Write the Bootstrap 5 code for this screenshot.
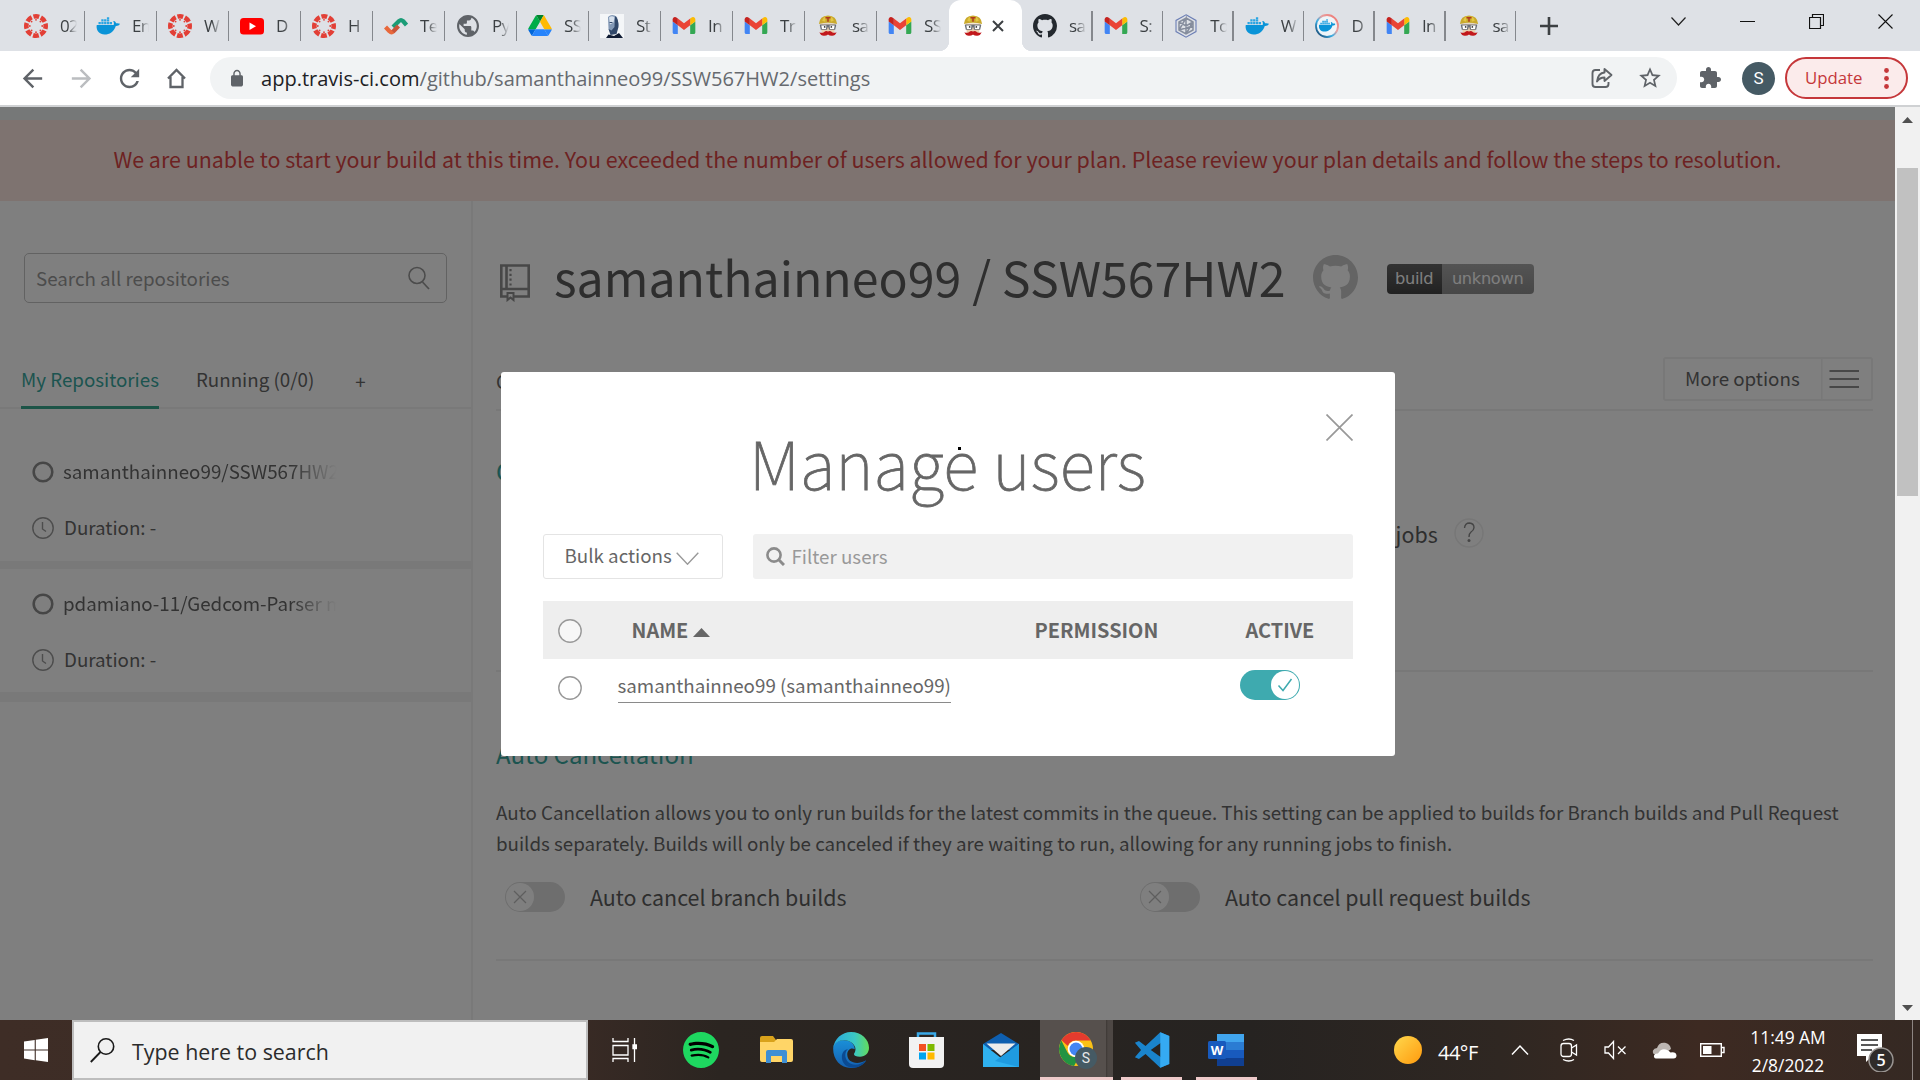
<!DOCTYPE html>
<html lang="en">
<head>
<meta charset="utf-8">
<title>Travis CI - Manage users</title>
<link href="https://cdn.jsdelivr.net/npm/bootstrap@5.3.0/dist/css/bootstrap.min.css" rel="stylesheet">
<style>
:root{--src:"Noto Sans CJK SC","Open Sans",sans-serif;--ui:"Open Sans","Noto Sans",sans-serif}
body{width:1920px;height:1080px;overflow:hidden;font-family:var(--src);font-size:18.75px;line-height:24px;color:#666;background:#fff}
svg{display:block;flex:none}
.defs{position:absolute;width:0;height:0}
.ui{font-family:var(--ui)}
/* browser tabs */
.tabstrip{height:51px;background:#dee1e6;color:#3c4043;font-size:17px;padding-left:13px}
.btab{width:72px;height:51px;flex:none;padding-left:11px}
.btab.late{width:70.6px}
.btab .cap{width:17px;margin-left:12px;overflow:hidden;white-space:nowrap;letter-spacing:-.6px;-webkit-mask-image:linear-gradient(90deg,#000 45%,transparent)}
.btab .sep{width:1.5px;height:30px;background:#85888d;margin-left:auto}
.btab.on{position:relative;width:73px;background:#fff;border-radius:12px 12px 0 0;padding-left:14px}
.btab.on::before,.btab.on::after{content:"";position:absolute;bottom:0;width:10px;height:10px}
.btab.on::before{left:-10px;background:radial-gradient(circle at 0 0,#dee1e6 10px,#fff 10.5px)}
.btab.on::after{right:-10px;background:radial-gradient(circle at 100% 0,#dee1e6 10px,#fff 10.5px)}
.winbtns{gap:54px;padding-right:27px;height:43px}
.toolbar{height:56px;border-bottom:2px solid #cfd1d3;color:#5f6368}
.omni{width:1467px;height:42px;border-radius:21px;background:#f1f3f4;margin-left:23px;font-size:20.05px}
.omni>span{padding-top:2px}
.avatar{width:33px;height:33px;border-radius:50%;background:#455a64;color:#fff;font-size:17px;font-family:Roboto,sans-serif}
.upd{width:123px;height:42px;border:2px solid #c5373a;border-radius:21px;background:#fbebeb;color:#c5373a;font-size:16.8px}
/* page */
.page{height:913px;position:relative}
.view{width:1895px;position:relative;overflow:hidden}
.topstrip{height:13px;background:#edf0f0}
.notice{height:81px;background:#fde7e1;color:#db4545;font-size:21.42px;padding-bottom:4px}
.side{width:473px;border-right:2px solid #f3f3f3;padding-top:52px;flex:none}
.searchbox{width:423px;height:50px;margin-left:24px;border:1.5px solid #c4c4c4;border-radius:5px;color:#999;padding:0 16px 0 11px}
.sidetabs{height:106px;box-shadow:inset 0 -2px #f3f3f3;padding-left:21px;gap:37px}
.sidetabs>span{padding-bottom:15px;border-bottom:3px solid transparent}
.sidetabs>.cur{color:#39a9a0;border-color:#39a98f}
.sidetabs>.plus{padding:0 0 13px 4px}
.repo{padding:23px 0 20px 32px;border-bottom:10px solid #f2f2f2;gap:32px}
.repo.first{padding:51px 0 21px 32px;border-bottom-width:8px}
.repo span{position:relative;top:-1px}
.repo .nm{width:274px;overflow:hidden;white-space:nowrap;-webkit-mask-image:linear-gradient(90deg,#000 83%,transparent)}
.main{padding:0 22px 0 23px}
.head{height:150px}
.rname{font-size:48.25px;line-height:60px;color:#5d5d5d}
.bdg{width:147px;height:30px;border-radius:4px;overflow:hidden;font-family:"DejaVu Sans",sans-serif;font-size:16.2px;margin-left:29px;margin-top:5px}
.bdg>span{letter-spacing:-.3px;text-align:center;line-height:30px}
.bdg .l{width:55px;background:linear-gradient(#666,#444);color:#fff}
.bdg .r{width:92px;background:linear-gradient(#a8a8a8,#8e8e8e);color:#fff}
.nav2{height:60px;border-bottom:2px solid #f0f0f0;padding-top:6px}
.more{width:210px;height:44px;border:2px solid #f0f0f0;border-radius:3px}
.sec{border-bottom:2px solid #f0f0f0}
.sec .ttl{font-size:24px;line-height:30px;color:#39a9a0}
.opt{font-size:21.42px;color:#5d5d5d}
.tgl{width:60px;height:30px;border-radius:15px;background:#dcdcdc;padding:1px;flex:none}
.tgl i{width:28px;height:28px;border-radius:50%;background:#fff;display:flex;align-items:center;justify-content:center}
.tgl.on{background:#3eaaaf;justify-content:flex-end}
.shade{position:absolute;inset:0;background:rgba(0,0,0,.5);padding-top:265px}
.dlg{position:relative;width:894px;height:384px;background:#fff;border-radius:3px;padding:0 42px}
.dlg h1{font-size:66px;font-weight:100;line-height:100px;color:#666;margin:39px 0 23px;text-align:center;-webkit-text-stroke:.8px #666}
.xbtn{position:absolute;left:825px;top:42px}
.spot{position:absolute;left:457px;top:75px;width:3px;height:3px;background:#000}
.bulk{width:180px;height:45px;border:1px solid #e4e4e4;border-radius:3px;background:#fff}
.bulk>span{padding-bottom:3px}
.filt{width:600px;height:45px;border-radius:3px;background:#f1f1f1;color:#999;padding-left:13px}
.thd{height:58px;background:#eee;margin-top:22px;font-weight:700;font-size:19.9px}
.uname{border-bottom:1.5px solid #8a8a8a;line-height:28px;padding-bottom:3px}
.c1{width:75px;padding-left:15px}.c2{width:418px}.c3{width:204px}
.sbar{width:25px;background:#f1f1f1}
.sbar .thumb{width:21px;height:328px;background:#c1c1c1}
/* taskbar */
.task{height:60px;background:linear-gradient(90deg,#3e2d26 0,#3a2b25 560px,#2b2521 720px,#262321 1250px,#2f2722 1500px,#3d2a22 1700px,#352923 1920px);color:#fff}
.tsearch{width:516px;height:60px;background:#f1f1f1;border:2px solid #bdbdbd;margin-left:24px;color:#2b2b2b;font-size:21.4px}
.tk{height:60px;display:flex;align-items:center;justify-content:center;border-bottom:3px solid transparent;padding-top:2px}
.tk.run{border-color:#eecaca}
.clock{font-size:17.4px;line-height:28px;white-space:nowrap}
</style>
</head>
<body>
<svg class="defs">
<symbol id="canvas" viewBox="0 0 24 24"><circle cx="12" cy="12" r="9.7" fill="none" stroke="#e23f36" stroke-width="4.6" stroke-dasharray="5.8 1.82" stroke-dashoffset="2.9"/><g fill="#e23f36"><circle cx="12" cy="5.8" r=".9"/><circle cx="12" cy="18.2" r=".9"/><circle cx="5.8" cy="12" r=".9"/><circle cx="18.2" cy="12" r=".9"/><circle cx="7.6" cy="7.6" r=".9"/><circle cx="16.4" cy="7.6" r=".9"/><circle cx="7.6" cy="16.4" r=".9"/><circle cx="16.4" cy="16.4" r=".9"/></g></symbol>
<symbol id="docker" viewBox="0 0 24 24"><path fill="#0a94d8" d="M1 11h16.600c.6-1.200.3-3-.4-4 1.600-.4 2.600 1 2.900 2.300 1.300-.3 3-.1 3.900.5-.8 1.800-2.500 2.300-4.200 2.200C18 18 13.500 20.500 8.600 20.500 3.500 20.500.2 17 .6 11.500z"/><g fill="#29a5e3"><path d="M2.500 8h2.300v2.300H2.500zM5.300 8h2.300v2.300H5.300zM8.100 8h2.300v2.300H8.100zM10.900 8h2.300v2.300h-2.300zM13.700 8H16v2.300h-2.300zM5.300 5.300h2.300v2.300H5.300zM8.100 5.300h2.300v2.300H8.100zM10.900 5.300h2.300v2.300h-2.300zM10.900 3.200h2.300V5h-2.300z"/></g></symbol>
<symbol id="yt" viewBox="0 0 24 24"><rect y="4" width="24" height="16.500" rx="3.500" fill="#f00"/><path fill="#fff" d="M9.500 8.500l6.500 3.700-6.500 3.700z"/></symbol>
<symbol id="wave" viewBox="0 0 24 24"><g fill="none" stroke-width="4.200" stroke-linejoin="round"><path stroke="#1b9c77" d="M9 13l6-6q2-1.800 4 0l3.500 4"/><path stroke="#e8683c" d="M1.500 13l4 4.300q2 1.800 4 0"/><path stroke="#c9553a" d="M9 17.700l5.500-5.700"/></g></symbol>
<symbol id="globe" viewBox="2 2 20 20"><path fill="#5f6368" d="M12 2C6.480 2 2 6.480 2 12s4.480 10 10 10 10-4.480 10-10S17.520 2 12 2zm-1 17.930c-3.950-.49-7-3.850-7-7.930 0-.62.08-1.210.21-1.790L9 15v1c0 1.100.9 2 2 2v1.930zm6.900-2.540c-.26-.81-1-1.390-1.900-1.390h-1v-3c0-.55-.45-1-1-1H8v-2h2c.55 0 1-.45 1-1V7h2c1.100 0 2-.9 2-2v-.41c2.930 1.190 5 4.060 5 7.410 0 2.080-.8 3.970-2.100 5.390z"/></symbol>
<symbol id="drive" viewBox="0 0 87.3 78"><path d="m6.600 66.850 3.850 6.650c.8 1.400 1.950 2.500 3.300 3.300l13.750-23.800h-27.500c0 1.550.4 3.100 1.200 4.500z" fill="#0066da"/><path d="m43.650 25-13.750-23.800c-1.350.8-2.500 1.900-3.300 3.300l-25.400 44a9.060 9.060 0 0 0 -1.200 4.500h27.500z" fill="#00ac47"/><path d="m73.550 76.800c1.350-.8 2.500-1.900 3.300-3.300l1.600-2.750 7.650-13.250c.8-1.400 1.200-2.950 1.200-4.500h-27.502l5.852 11.500z" fill="#2684fc"/><path d="m43.650 25 13.750-23.800c-1.350-.8-2.900-1.200-4.500-1.200h-18.500c-1.600 0-3.150.45-4.500 1.200z" fill="#00832d"/><path d="m59.800 53h-32.300l-13.750 23.800c1.350.8 2.900 1.200 4.500 1.200h50.800c1.600 0 3.150-.45 4.500-1.200z" fill="#2684fc"/><path d="m73.400 26.500-12.700-22c-.8-1.400-1.950-2.500-3.300-3.300l-13.750 23.800 16.150 28h27.450c0-1.550-.4-3.100-1.200-4.500z" fill="#ffba00"/></symbol>
<symbol id="bust" viewBox="0 0 24 24"><rect width="24" height="24" fill="#f4f6f8"/><path fill="#8399b6" d="M8 3q4-4 9 0l1.500 8-3 8-4 1-3-5z"/><path fill="#31486a" d="M15 2q4 3 3.500 11l-2 7-6 1-2-6 3 1.500 3-3.500z"/><path fill="#d6e0ec" d="M9 3.500q3-2.500 5.500 0l-1 5-3.500 2z"/><path fill="#0f1b33" d="M6 24l2.500-3.500 5.500 1.500 5-3 4 5z"/><path fill="#31486a" d="M9.500 8h3v1h-3z"/></symbol>
<symbol id="gmail" viewBox="52 42 88 66"><path fill="#4285f4" d="M58 108h14V74L52 59v43c0 3.320 2.690 6 6 6"/><path fill="#34a853" d="M120 108h14c3.320 0 6-2.690 6-6V59l-20 15"/><path fill="#fbbc04" d="M120 48v26l20-15v-8c0-7.420-8.470-11.650-14.400-7.200"/><path fill="#ea4335" d="M72 74V48l24 18 24-18v26L96 92"/><path fill="#c5221f" d="M52 51v8l20 15V48l-5.600-4.200c-5.940-4.450-14.400-.22-14.400 7.200"/></symbol>
<symbol id="travis" viewBox="0 0 20 23"><path fill="#e8cfae" d="M2.500 9h15l-1 9-3 3h-7l-3-3z"/><path fill="#c9a92c" d="M.5 9.500Q1 1 10 .6 19 1 19.500 9.500q-9.500-3-19 0z"/><path fill="#e3c743" d="M4 6q1-4 4-4.500L7 7zM16 6q-1-4-4-4.500L13 7z"/><path fill="#b03a1c" d="M7.300 2h5.400v1.700h-1.900V7H9.200V3.700H7.300z"/><path fill="#6b7078" d="M1.500 10h17v1.300l-1 4.200H11l-.6-2.800h-.8L9 15.500H2.500l-1-4.200z"/><path fill="#fff" d="M3 11h5.300l-.4 3.600H3.700zM11.700 11H17l-.7 3.600h-4.200z"/><circle cx="6.500" cy="12.500" r=".9" fill="#333"/><circle cx="13.500" cy="12.500" r=".9" fill="#333"/><path fill="#c2181c" d="M10 17.300q2-1.400 4 .4 2 1.700 5 .4-1.500 3.900-5 3.700-2.500-.2-4-1.500-1.500 1.300-4 1.500-3.500.2-5-3.700 3 1.300 5-.4 2-1.800 4-.4z"/></symbol>
<symbol id="gh" viewBox="0 0 16 16"><path d="M8 0C3.580 0 0 3.580 0 8c0 3.540 2.290 6.530 5.470 7.590.4.07.55-.17.55-.38 0-.19-.01-.82-.01-1.490-2.010.37-2.530-.49-2.690-.94-.09-.23-.48-.94-.82-1.130-.28-.15-.68-.52-.01-.53.63-.01 1.080.58 1.230.82.72 1.210 1.870.87 2.330.66.07-.52.28-.87.51-1.070-1.780-.2-3.640-.89-3.640-3.950 0-.87.31-1.590.82-2.150-.08-.2-.36-1.020.08-2.120 0 0 .67-.21 2.200.82.64-.18 1.320-.27 2-.27.68 0 1.360.09 2 .27 1.530-1.040 2.200-.82 2.200-.82.44 1.100.16 1.920.08 2.120.51.56.82 1.270.82 2.150 0 3.070-1.870 3.750-3.650 3.950.29.25.54.73.54 1.480 0 1.070-.01 1.930-.01 2.200 0 .21.15.46.55.38A8.013 8.013 0 0016 8c0-4.420-3.580-8-8-8z"/></symbol>
<symbol id="hexa" viewBox="0 0 24 24"><g fill="none" stroke="#6c7fb5"><path stroke-width="1.100" d="M12 .8l10 5.600v11.200l-10 5.600-10-5.600V6.400z"/><path stroke="#858d9d" stroke-width="1.500" d="M12 4l7 4v8l-7 4-7-4V8zM5 16l7-12v16M5 8l7 4 7-4M19 8l-7 12M5 16l14-4"/></g></symbol>
<linearGradient id="rg" x1="1" y1="0" x2="0" y2="1"><stop offset="0" stop-color="#f0706a"/><stop offset=".4" stop-color="#e8a0a0"/><stop offset=".6" stop-color="#3bb0e6"/><stop offset="1" stop-color="#12335c"/></linearGradient>
<symbol id="dockring" viewBox="0 0 24 24"><circle cx="12" cy="12" r="11" fill="#eef4f8" stroke="url(#rg)" stroke-width="1.800"/><use href="#docker" x="3.500" y="3" width="17" height="17"/></symbol>
<symbol id="mag" viewBox="0 0 22 24"><circle cx="9" cy="9.500" r="8" fill="none" stroke="currentColor" stroke-width="1.600"/><path d="M14.500 16l6.500 7" stroke="currentColor" stroke-width="1.800"/></symbol>
<symbol id="ring" viewBox="0 0 22 22"><circle cx="11" cy="11" r="9.300" fill="none" stroke="#8d8d8d" stroke-width="2.600"/></symbol>
<symbol id="clk" viewBox="0 0 22 22"><circle cx="11" cy="11" r="10.200" fill="none" stroke="#9a9a9a" stroke-width="1.400"/><path d="M10.500 5v7l3.500 2.500" fill="none" stroke="#9a9a9a" stroke-width="1.400"/></symbol>
<symbol id="pick" viewBox="0 0 24 24"><circle cx="12" cy="12" r="11.200" fill="#fff" fill-opacity=".5" stroke="#999" stroke-width="1.400"/></symbol>
<symbol id="off" viewBox="0 0 14 14"><path d="M1 1l12 12M13 1L1 13" stroke="#bdbdbd" stroke-width="1.300"/></symbol>
</svg>

<div class="tabstrip ui d-flex align-items-center">
 <div class="btab d-flex align-items-center"><svg width="24" height="24"><use href="#canvas"/></svg><span class="cap">02</span><i class="sep"></i></div>
 <div class="btab d-flex align-items-center"><svg width="24" height="24"><use href="#docker"/></svg><span class="cap">En</span><i class="sep"></i></div>
 <div class="btab d-flex align-items-center"><svg width="24" height="24"><use href="#canvas"/></svg><span class="cap">W</span><i class="sep"></i></div>
 <div class="btab d-flex align-items-center"><svg width="24" height="24"><use href="#yt"/></svg><span class="cap">D</span><i class="sep"></i></div>
 <div class="btab d-flex align-items-center"><svg width="24" height="24"><use href="#canvas"/></svg><span class="cap">H</span><i class="sep"></i></div>
 <div class="btab d-flex align-items-center"><svg width="24" height="24"><use href="#wave"/></svg><span class="cap">Te</span><i class="sep"></i></div>
 <div class="btab d-flex align-items-center"><svg width="24" height="22"><use href="#globe"/></svg><span class="cap">Py</span><i class="sep"></i></div>
 <div class="btab d-flex align-items-center"><svg width="24" height="21"><use href="#drive"/></svg><span class="cap">SS</span><i class="sep"></i></div>
 <div class="btab d-flex align-items-center"><svg width="24" height="24"><use href="#bust"/></svg><span class="cap">St</span><i class="sep"></i></div>
 <div class="btab d-flex align-items-center"><svg width="24" height="17"><use href="#gmail"/></svg><span class="cap">In</span><i class="sep"></i></div>
 <div class="btab d-flex align-items-center"><svg width="24" height="17"><use href="#gmail"/></svg><span class="cap">Tr</span><i class="sep"></i></div>
 <div class="btab d-flex align-items-center"><svg width="24" height="22"><use href="#travis"/></svg><span class="cap">sa</span><i class="sep"></i></div>
 <div class="btab d-flex align-items-center"><svg width="24" height="17"><use href="#gmail"/></svg><span class="cap">SS</span></div>
 <div class="btab on d-flex align-items-center"><svg width="20" height="22"><use href="#travis"/></svg><svg class="ms-2" width="14" height="14" viewBox="0 0 14 14"><path d="M2 2l10 10M12 2L2 12" stroke="#3c4043" stroke-width="2"/></svg></div>
 <div class="btab late d-flex align-items-center"><svg width="24" height="24" fill="#24292f"><use href="#gh"/></svg><span class="cap">sa</span><i class="sep"></i></div>
 <div class="btab late d-flex align-items-center"><svg width="24" height="17"><use href="#gmail"/></svg><span class="cap">S:</span><i class="sep"></i></div>
 <div class="btab late d-flex align-items-center"><svg width="24" height="24"><use href="#hexa"/></svg><span class="cap">To</span><i class="sep"></i></div>
 <div class="btab late d-flex align-items-center"><svg width="24" height="24"><use href="#docker"/></svg><span class="cap">W</span><i class="sep"></i></div>
 <div class="btab late d-flex align-items-center"><svg width="24" height="24"><use href="#dockring"/></svg><span class="cap">D</span><i class="sep"></i></div>
 <div class="btab late d-flex align-items-center"><svg width="24" height="17"><use href="#gmail"/></svg><span class="cap">In</span><i class="sep"></i></div>
 <div class="btab late d-flex align-items-center"><svg width="24" height="22"><use href="#travis"/></svg><span class="cap">sa</span><i class="sep"></i></div>
 <svg style="margin-left:24px" width="18" height="18" viewBox="0 0 18 18"><path d="M9 0v18M0 9h18" stroke="#3c4043" stroke-width="2.600"/></svg>
 <div class="winbtns d-flex align-items-center ms-auto align-self-start">
  <svg width="15" height="15" viewBox="0 0 15 15"><path d="M.5 3.500l7 7.500 7-7.500" fill="none" stroke="#222" stroke-width="1.200"/></svg>
  <svg width="15" height="15" viewBox="0 0 15 15"><path d="M0 7.500h15" stroke="#111"/></svg>
  <svg width="15" height="15" viewBox="0 0 15 15"><path d="M.5 3.500h11v11H.5zM3.500 3V.5h11v11H12" fill="none" stroke="#111" stroke-width="1.200"/></svg>
  <svg width="15" height="15" viewBox="0 0 15 15"><path d="M.5.5l14 14M14.500.5l-14 14" stroke="#111" stroke-width="1.100"/></svg>
 </div>
</div>

<div class="toolbar ui d-flex align-items-center">
 <svg style="margin-left:18px" width="29" height="29" viewBox="0 0 24 24" fill="#5f6368"><path d="M20 11H7.830l5.590-5.590L12 4l-8 8 8 8 1.410-1.410L7.830 13H20v-2z"/></svg>
 <svg style="margin-left:20px" width="29" height="29" viewBox="0 0 24 24" fill="#bbbdc0"><path d="M4 11h12.170l-5.590-5.590L12 4l8 8-8 8-1.410-1.410L16.170 13H4v-2z"/></svg>
 <svg style="margin-left:19px" width="29" height="29" viewBox="0 0 24 24" fill="#5f6368"><path d="M17.650 6.350C16.200 4.900 14.210 4 12 4c-4.420 0-7.990 3.580-7.990 8s3.570 8 7.990 8c3.730 0 6.840-2.550 7.730-6h-2.080c-.82 2.330-3.040 4-5.650 4-3.310 0-6-2.690-6-6s2.690-6 6-6c1.660 0 3.140.69 4.220 1.780L13 11h7V4l-2.350 2.350z"/></svg>
 <svg style="margin-left:22px" width="21" height="21" viewBox="0 0 21 21"><path d="M2 10.500L10.500 2l8.500 8.500M4.500 9v10h12V9" fill="none" stroke="#5f6368" stroke-width="2.300"/></svg>
 <div class="omni d-flex align-items-center">
  <svg style="margin-left:18px" width="18" height="19" viewBox="0 0 24 24" preserveAspectRatio="none" fill="#5f6368"><path d="M18 8h-1V6c0-2.760-2.240-5-5-5S7 3.240 7 6v2H6c-1.100 0-2 .9-2 2v10c0 1.100.9 2 2 2h12c1.100 0 2-.9 2-2V10c0-1.100-.9-2-2-2zm-2.900 0H8.900V6c0-1.710 1.390-3.100 3.100-3.100s3.100 1.390 3.100 3.100v2z"/></svg>
  <span style="margin-left:15px;color:#666a6f"><span style="color:#202124">app.travis-ci.com</span>/github/samanthainneo99/SSW567HW2/settings</span>
  <svg class="ms-auto" width="22" height="22" viewBox="0 0 22 22" fill="none" stroke="#5f6368" stroke-width="1.900"><path d="M9 3H4.500Q1.500 3 1.500 6v11q0 3 3 3h10q3 0 3-3v-2"/><path stroke-linejoin="round" d="M13.500 2l7 6-7 6v-3.500Q8.500 10.500 6 14.500 7 6 13.500 5.500z"/></svg>
  <svg style="margin:0 14px 0 24px" width="26" height="26" viewBox="0 0 24 24" fill="#5f6368"><path d="M22 9.240l-7.190-.62L12 2 9.190 8.630 2 9.240l5.460 4.730L5.820 21 12 17.270 18.180 21l-1.630-7.030L22 9.240zM12 15.400l-3.760 2.270 1-4.280-3.320-2.880 4.380-.38L12 6.100l1.710 4.040 4.380.38-3.320 2.880 1 4.280L12 15.400z"/></svg>
 </div>
 <svg style="margin-left:21px" width="24" height="24" viewBox="0 0 24 24" fill="#5f6368"><path d="M20.500 11H19V7c0-1.100-.9-2-2-2h-4V3.500C13 2.120 11.880 1 10.500 1S8 2.120 8 3.500V5H4c-1.100 0-1.990.9-1.990 2v3.800H3.500c1.490 0 2.700 1.210 2.700 2.700s-1.210 2.700-2.700 2.700H2V20c0 1.100.9 2 2 2h3.800v-1.500c0-1.490 1.210-2.700 2.700-2.700 1.490 0 2.700 1.210 2.700 2.700V22H17c1.100 0 2-.9 2-2v-4h1.500c1.380 0 2.500-1.120 2.500-2.500S21.880 11 20.500 11z"/></svg>
 <div class="avatar d-flex align-items-center justify-content-center" style="margin-left:20px">S</div>
 <div class="upd d-flex align-items-center" style="margin-left:10px"><span style="margin-left:18px">Update</span><svg class="ms-auto" style="margin-right:17px" width="5" height="21" viewBox="0 0 5 21" fill="#c5373a"><circle cx="2.500" cy="2.500" r="2.400"/><circle cx="2.500" cy="10.500" r="2.400"/><circle cx="2.500" cy="18.500" r="2.400"/></svg></div>
</div>

<div class="page d-flex">
 <div class="view">
  <div class="topstrip"></div>
  <div class="notice d-flex align-items-center justify-content-center"><span>We are unable to start your build at this time. You exceeded the number of users allowed for your plan. Please review your plan details and follow the steps to resolution.</span></div>
  <div class="d-flex" style="height:819px">
   <div class="side">
    <div class="searchbox d-flex align-items-center justify-content-between"><span>Search all repositories</span><svg width="22" height="24"><use href="#mag"/></svg></div>
    <div class="sidetabs d-flex align-items-end"><span class="cur">My Repositories</span><span>Running (0/0)</span><span class="plus">+</span></div>
    <div class="repo first d-flex flex-column">
     <div class="d-flex align-items-center"><svg width="22" height="22"><use href="#ring"/></svg><span class="nm" style="margin-left:9px">samanthainneo99/SSW567HW2</span></div>
     <div class="d-flex align-items-center"><svg width="22" height="22"><use href="#clk"/></svg><span style="margin-left:10px">Duration: -</span></div>
    </div>
    <div class="repo d-flex flex-column">
     <div class="d-flex align-items-center"><svg width="22" height="22"><use href="#ring"/></svg><span class="nm" style="margin-left:9px">pdamiano-11/Gedcom-Parser m</span></div>
     <div class="d-flex align-items-center"><svg width="22" height="22"><use href="#clk"/></svg><span style="margin-left:10px">Duration: -</span></div>
    </div>
   </div>
   <div class="main flex-grow-1">
    <div class="head d-flex align-items-center">
     <svg style="margin:14px 24px 0 4px" width="30" height="38" viewBox="0 0 30 38" fill="none" stroke="#8e8e8e" stroke-width="2.600"><path d="M8 32.500H1.300v-31h27.400v31H14M1.300 25h27.400M6.500 1.500V25"/><path stroke-dasharray="2.200 2.600" stroke-width="2.200" d="M10.500 5v17"/><path d="M7.500 29h6v7l-3-2.500-3 2.500z" stroke-width="2"/></svg>
     <span class="rname">samanthainneo99 / SSW567HW2</span>
     <svg style="margin:3px 0 0 27px" width="45" height="45" fill="#c9c9c9"><use href="#gh"/></svg>
     <div class="bdg d-flex"><span class="l">build</span><span class="r">unknown</span></div>
    </div>
    <div class="nav2 d-flex justify-content-between"><span style="margin:12px 0 0 0">Current</span>
     <div class="more d-flex align-items-center"><span style="margin-left:20px;padding-bottom:3px">More options</span><svg class="ms-auto" width="50" height="40" viewBox="0 0 50 40"><path d="M.5 0v40" stroke="#f0f0f0" stroke-width="2"/><path d="M8.500 12H38M8.500 20H38M8.500 28H38" stroke="#8e8e8e" stroke-width="2"/></svg></div>
    </div>
    <div class="sec" style="height:261px;padding-top:45px">
     <div class="ttl">General</div>
     <div class="d-flex align-items-center opt" style="margin-top:32px;padding-left:9px"><div style="width:635px"></div><div class="tgl d-flex"><i><svg width="14" height="14"><use href="#off"/></svg></i></div><span style="margin:2px 0 0 25px">Limit concurrent jobs</span><svg style="margin-left:16px" width="30" height="30" viewBox="0 0 30 30"><circle cx="15" cy="15" r="14" fill="none" stroke="#eee" stroke-width="1.500"/><path d="M10.500 10q.5-5 5-5 4.500.5 4.500 4.500 0 2.500-3 4.500-2 1.500-2 5" fill="none" stroke="#8a8a8a" stroke-width="1.400"/><circle cx="15" cy="22.500" r="1.500" fill="#8a8a8a"/></svg></div>
    </div>
    <div class="sec" style="height:289px;padding-top:67px">
     <div class="ttl">Auto Cancellation</div>
     <p class="mb-0" style="line-height:31px;margin-top:27px;white-space:nowrap">Auto Cancellation allows you to only run builds for the latest commits in the queue. This setting can be applied to builds for Branch builds and Pull Request<br>builds separately. Builds will only be canceled if they are waiting to run, allowing for any running jobs to finish.</p>
     <div class="d-flex align-items-center opt" style="margin-top:24px;padding-left:9px">
      <div class="d-flex align-items-center" style="width:635px"><div class="tgl d-flex"><i><svg width="14" height="14"><use href="#off"/></svg></i></div><span style="margin-left:25px">Auto cancel branch builds</span></div>
      <div class="tgl d-flex"><i><svg width="14" height="14"><use href="#off"/></svg></i></div><span style="margin-left:25px">Auto cancel pull request builds</span>
     </div>
    </div>
   </div>
  </div>
  <div class="shade d-flex justify-content-center align-items-start">
   <div class="dlg">
    <h1>Manage users</h1>
    <svg class="xbtn" width="27" height="27" viewBox="0 0 27 27"><path d="M.5.5l26 26M26.500.5l-26 26" stroke="#999" stroke-width="1.700"/></svg>
    <i class="spot"></i>
    <div class="d-flex justify-content-between">
     <div class="bulk d-flex align-items-center"><span style="margin-left:21px">Bulk actions</span><svg style="margin:3px 0 0 4px" width="23" height="13" viewBox="0 0 23 13"><path d="M.7.7l10.800 11.500L22.300.7" fill="none" stroke="#999" stroke-width="1.400"/></svg></div>
     <div class="filt d-flex align-items-center"><svg width="19" height="19" viewBox="0 0 19 19"><circle cx="8" cy="8" r="6.600" fill="none" stroke="#8b8b8b" stroke-width="2.600"/><path d="M12.500 12.500l5.500 5.500" stroke="#8b8b8b" stroke-width="3"/></svg><span style="margin:-1px 0 0 7px">Filter users</span></div>
    </div>
    <div class="thd d-flex align-items-center">
     <div class="c1"><svg style="margin-top:2px" width="24" height="24"><use href="#pick"/></svg></div>
     <div class="c2 d-flex align-items-center" style="padding-left:14px"><span>NAME</span><svg style="margin:5px 0 0 5px" width="17" height="9" viewBox="0 0 17 9"><path d="M0 9L8.500 0 17 9z" fill="#666"/></svg></div>
     <div class="c3" style="margin-left:-1px">PERMISSION</div><div style="padding-left:7px">ACTIVE</div>
    </div>
    <div class="d-flex align-items-start">
     <div class="c1" style="padding-top:17px"><svg width="24" height="24"><use href="#pick"/></svg></div>
     <div class="c2" style="padding-top:12px"><span class="uname d-inline-block">samanthainneo99 (samanthainneo99)</span></div>
     <div class="c3"></div>
     <div class="tgl on d-flex" style="margin-top:11px"><i><svg width="16" height="14" viewBox="0 0 16 14"><path d="M1.500 7.500l4.500 5L14.500 1" fill="none" stroke="#3eaaaf" stroke-width="1.500"/></svg></i></div>
    </div>
   </div>
  </div>
 </div>
 <div class="sbar d-flex flex-column align-items-center justify-content-between">
  <svg style="margin-top:10px" width="11" height="6" viewBox="0 0 11 6"><path d="M0 6L5.500 0 11 6z" fill="#505050"/></svg>
  <div class="thumb" style="margin-top:45px"></div>
  <svg class="mt-auto" style="margin-bottom:9px" width="11" height="6" viewBox="0 0 11 6"><path d="M0 0l5.500 6L11 0z" fill="#505050"/></svg>
 </div>
</div>

<div class="task ui d-flex align-items-center">
 <svg style="margin-left:24px" width="24" height="24" viewBox="0 0 24 24" fill="#fff"><path d="M0 3.400l10.700-1.500v9.600H0zM11.800 1.700L24 0v11.500H11.800zM0 12.600h10.700v9.600L0 20.600zM11.800 12.600H24V24l-12.200-1.700z"/></svg>
 <div class="tsearch d-flex align-items-center"><svg style="margin-left:16px" width="25" height="25" viewBox="0 0 25 25"><circle cx="16" cy="8.500" r="7.700" fill="none" stroke="#1a1a1a" stroke-width="1.600"/><path d="M10.500 14L.8 24" stroke="#1a1a1a" stroke-width="1.800"/></svg><span style="margin:3px 0 0 17px">Type here to search</span></div>
 <div class="tk" style="width:73px"><svg width="25" height="24" viewBox="0 0 25 24" fill="none" stroke="#fff" stroke-width="1.300"><path d="M1 0v3.500h15V0M1 7.500h15v9.500H1zM1 24v-3.500h15V24M22.500 0v7M22.500 11v13"/><path d="M21 7h3.500v3.500H21z" fill="#fff"/></svg></div>
 <div class="tk" style="width:80px"><svg width="36" height="36" viewBox="0 0 24 24"><circle cx="12" cy="12" r="10" fill="#000"/><path fill="#1ed760" d="M12 0C5.400 0 0 5.400 0 12s5.400 12 12 12 12-5.400 12-12S18.660 0 12 0zm5.521 17.340c-.24.359-.66.48-1.021.24-2.820-1.740-6.360-2.101-10.561-1.141-.418.122-.779-.179-.899-.539-.12-.421.18-.78.54-.9 4.560-1.021 8.520-.6 11.640 1.320.42.18.479.659.301 1.020zm1.440-3.300c-.301.42-.841.6-1.262.3-3.239-1.980-8.159-2.580-11.939-1.380-.479.12-1.020-.12-1.140-.6-.12-.48.12-1.021.6-1.141C9.600 9.900 15 10.561 18.720 12.840c.361.181.54.78.241 1.200zm.12-3.360C15.240 8.400 8.820 8.160 5.160 9.301c-.6.179-1.200-.181-1.380-.721-.18-.601.18-1.200.72-1.381 4.260-1.260 11.280-1.020 15.721 1.621.539.3.719 1.020.419 1.560-.299.421-1.020.599-1.559.3z"/></svg></div>
 <div class="tk" style="width:70px"><svg width="33" height="27" viewBox="0 0 33 27"><path fill="#d9a21b" d="M0 2Q0 0 2 0h11l3 4v4H0z"/><path fill="#ffd567" d="M0 6h14l3-3h14q2 0 2 2v19q0 2-2 2H2q-2 0-2-2z"/><path fill="#3f8fd4" d="M6 16q0-2 2-2h17q2 0 2 2v11h-5v-7H11v7H6z"/></svg></div>
 <div class="tk" style="width:80px"><svg width="36" height="36" viewBox="0 0 24 24"><defs><linearGradient id="e1" x2="1"><stop stop-color="#2aa9dd"/><stop offset=".6" stop-color="#3bc8c4"/><stop offset="1" stop-color="#63dc5c"/></linearGradient><linearGradient id="e2" x2="0" y2="1"><stop stop-color="#1a8fd8"/><stop offset="1" stop-color="#1560b0"/></linearGradient></defs><path fill="url(#e2)" d="M.1 11C.3 7 3.500 5.500 7.500 5.500c4 0 7 2.500 7 6-2.500-1.500-5 .5-5 3.500 0 5 6 7.500 12.500 4-2 3.300-6 5-10 5C5 24 0 18.500.1 11z"/><path fill="#0b4a92" d="M10 11.500c-2 1.500-2.500 5-.5 7.800 3 3.700 8.500 3.200 12.700-.6-2 4-7.200 6.300-12 4.500C4.500 21 4.500 12 10 11.500z"/><path fill="url(#e1)" d="M.1 11C.8 4.500 6 0 12 0c7 0 12 5 12 10.500 0 3.500-2.500 6-6 6-2.500 0-4-.8-4-1.700 0-.8 1-1.300 1-3.300 0-3-3.300-6-7.500-6C3.500 5.500.8 7.500.1 11z"/></svg></div>
 <div class="tk" style="width:70px"><svg width="35" height="36" viewBox="0 0 35 36"><path d="M9 8V1.500h17V8" fill="none" stroke="#3aa9e8" stroke-width="2.500"/><path fill="#f2f2f2" d="M0 5h35v27q0 4-4 4H4q-4 0-4-4z"/><path fill="#f25022" d="M10 12h7v7h-7z"/><path fill="#7fba00" d="M18.500 12h7v7h-7z"/><path fill="#00a4ef" d="M10 20.500h7v7h-7z"/><path fill="#ffb900" d="M18.500 20.500h7v7h-7z"/></svg></div>
 <div class="tk" style="width:79px"><svg width="36" height="34" viewBox="0 0 36 34"><path fill="#0e5fb0" d="M0 11L18 0l18 11v6H0z"/><path fill="#2fb1ef" d="M0 11l18 14L36 11v23H0z"/><path fill="#1f9be0" d="M36 11L12 28l24 6z"/><path fill="#ececec" d="M3.500 10.500h29L18 23z"/></svg></div>
 <div class="tk run" style="width:73px;background:linear-gradient(90deg,#56504d 66px,#3d3835 66px,#4d4744 68px)"><svg style="margin-left:2px" width="40" height="40" viewBox="0 0 40 40"><g transform="translate(1 2)"><circle cx="17" cy="17" r="17" fill="#fbc116"/><path fill="#e33b2e" d="M17 0c6.300 0 11.800 3.400 14.700 8.500H17c-4 0-7 2-8.200 5.500L2.500 8.200C5.600 3.300 10.900 0 17 0z"/><path fill="#229342" d="M2.300 8.500A17 17 0 0 0 15 33.900l7.300-12.700c-3 5.300-10.500 5-13.500-.2z"/><circle cx="17" cy="17" r="8.300" fill="#fff"/><circle cx="17" cy="17" r="6.500" fill="#4285f4"/></g><circle cx="28" cy="28" r="11" fill="#455a64"/><text x="28" y="33" font-family="Roboto,sans-serif" font-size="14" fill="#e8e8e8" text-anchor="middle">S</text></svg></div>
 <div class="tk run" style="width:61px;margin-left:8px"><svg width="36" height="36" viewBox="0 0 24 24"><path fill="#1a84cc" d="M17.500.2L7.700 9.300 3.300 6 .6 7.200 4.700 12 .6 16.800 3.300 18l4.400-3.300 9.800 9.100 6-2.500V2.700zM18 7.200v9.600L11.200 12z"/><path fill="#35aaf2" d="M17.500.2l6 2.500v18.600l-6 2.500z"/></svg></div>
 <div class="tk run" style="width:61px;margin-left:14px"><svg style="margin-right:2px" width="36" height="32" viewBox="0 0 36 32"><path fill="#41a5ee" d="M9 0h27v8H9z"/><path fill="#2b7cd3" d="M9 8h27v8H9z"/><path fill="#185abd" d="M9 16h27v8H9z"/><path fill="#103f91" d="M9 24h27v8H9z"/><rect y="7" width="18" height="18" rx="1.500" fill="#185abd"/><text x="9" y="21" font-family="Open Sans,sans-serif" font-weight="700" font-size="13" fill="#fff" text-anchor="middle">W</text></svg></div>
 <svg style="margin-left:137px" width="28" height="28"><defs><linearGradient id="sun" x2="1" y2="1"><stop stop-color="#ffd84d"/><stop offset="1" stop-color="#ff9a0d"/></linearGradient></defs><circle cx="14" cy="14" r="14" fill="url(#sun)"/></svg>
 <span style="margin:5px 0 0 16px;width:73px;font-size:20px;letter-spacing:-.5px">44°F</span>
 <svg width="18" height="12" viewBox="0 0 18 12"><path d="M1 10.500L9 2l8 8.500" fill="none" stroke="#fff" stroke-width="1.500"/></svg>
 <svg style="margin-left:31px" width="18" height="24" viewBox="0 0 18 24" fill="none" stroke="#fff" stroke-width="1.300"><rect x="1" y="5.500" width="10.500" height="13" rx="2.500"/><path d="M11.500 10l5-3v10l-5-3M3 2.500Q9-.5 14 2.500M3 21.500q6 3 11 0"/></svg>
 <svg style="margin-left:26px" width="23" height="20" viewBox="0 0 23 20" fill="none" stroke="#fff" stroke-width="1.300"><path d="M1 7h3.500l5-5.500v17l-5-5.500H1zM14 6.500l7.500 7.500M21.500 6.500L14 14"/></svg>
 <svg style="margin-left:25px" width="25" height="17" viewBox="0 0 25 17"><path fill="#bcb6b2" d="M4 13Q0 12 1 8.500 2 6 5 6 7 0 13 .8q5 1 6 6.200L9 14z"/><path fill="#fff" d="M4 16.500Q1.500 16 2 13.500 3 11 6 11.500 9 6 14 7.500q3 1 4.500 3Q24 9.500 24.500 13.500q0 3-3 3z"/></svg>
 <svg style="margin-left:23px" width="25" height="14" viewBox="0 0 25 14"><path d="M.7.7h20.600v12.600H.7zM22 4.500h2v5h-2" fill="none" stroke="#fff" stroke-width="1.400"/><path fill="#fff" d="M3 3h8.500v8H3z"/></svg>
 <div class="clock text-center" style="margin:2px 0 0 23px;width:80px">11:49 AM<br>2/8/2022</div>
 <svg style="margin-left:29px" width="38" height="44" viewBox="0 0 38 44"><path fill="#fff" d="M0 6h25v22H15l-6 6v-6H0z"/><path d="M4 12h17M4 17h17M4 22h11" stroke="#222" stroke-width="1.500"/><circle cx="24" cy="32" r="12" fill="#2f2b29" stroke="#9a9592" stroke-width="1.500"/><text x="24" y="38" font-family="Open Sans,sans-serif" font-size="16" font-weight="600" fill="#fff" text-anchor="middle">5</text></svg>
 <i style="width:1px;height:60px;background:#8d8582;margin-left:17px"></i>
</div>
<script src="https://cdn.jsdelivr.net/npm/bootstrap@5.3.0/dist/js/bootstrap.bundle.min.js"></script>
</body>
</html>
